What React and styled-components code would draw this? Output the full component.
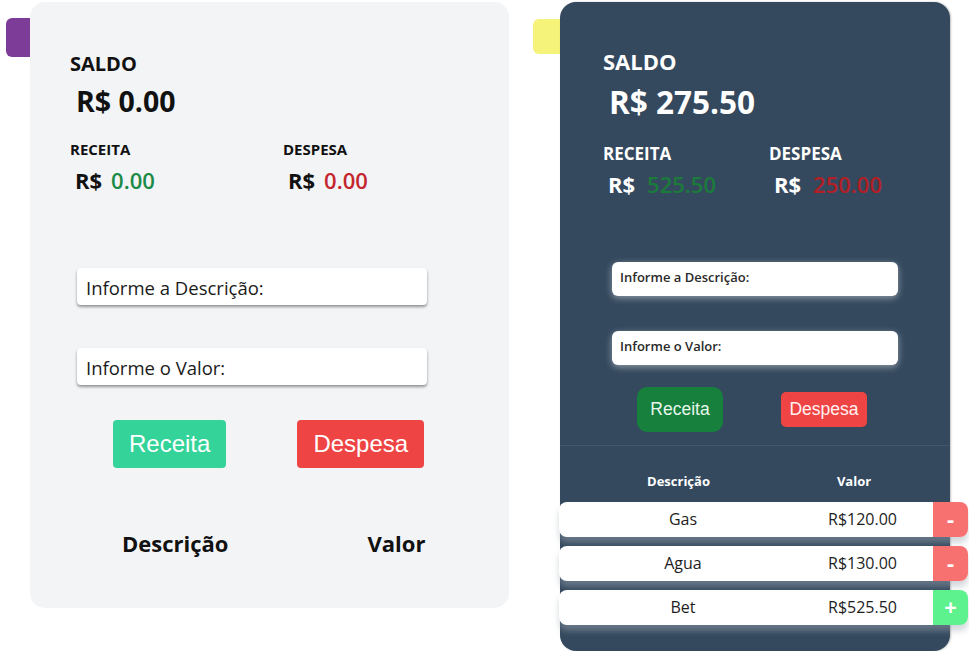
import React from 'react'
import styled, { createGlobalStyle } from 'styled-components'

const GlobalStyle = createGlobalStyle`
  body {
    margin: 0;
    background: #ffffff;
    font-family: 'Open Sans', 'Noto Sans', sans-serif;
  }
`

const lancamentos = [
  { descricao: 'Gas', valor: 'R$120.00', tipo: 'despesa' },
  { descricao: 'Agua', valor: 'R$130.00', tipo: 'despesa' },
  { descricao: 'Bet', valor: 'R$525.50', tipo: 'receita' },
]

function App() {
  return (
    <>
      <GlobalStyle />
      <Page>
        {/* ---- tema claro */}
        <Group>
          <Tab $color="#7d3c98" $w={24} $h={39} $top={16} />
          <LightPanel>
            <Label $size={20}>SALDO</Label>
            <Big $size={28.5} $mt={13}>R$ 0.00</Big>
            <Totals $col={213} $mt={26}>
              <div>
                <Label $size={15}>RECEITA</Label>
                <Amount $size={22} $mt={12} $gap={9}>
                  R$<Num $color="#1b8a47">0.00</Num>
                </Amount>
              </div>
              <div>
                <Label $size={15}>DESPESA</Label>
                <Amount $size={22} $mt={12} $gap={9}>
                  R$<Num $color="#c4262d">0.00</Num>
                </Amount>
              </div>
            </Totals>
            <LightInput placeholder="Informe a Descrição:" $mt={77} />
            <LightInput placeholder="Informe o Valor:" $mt={43} />
            <LightButtons>
              <LightButton $bg="#34d399">Receita</LightButton>
              <LightButton $bg="#ef4444">Despesa</LightButton>
            </LightButtons>
            <LightHead>
              <span>Descrição</span>
              <span>Valor</span>
            </LightHead>
          </LightPanel>
        </Group>

        {/* ---- tema escuro */}
        <Group $ml={24}>
          <Tab $color="#f5f379" $w={27} $h={35} $top={17} />
          <DarkPanel>
            <Summary>
              <Label $size={22} $light>SALDO</Label>
              <Big $size={31.5} $mt={14} $light>R$ 275.50</Big>
              <Totals $col={166} $mt={27}>
                <div>
                  <Label $size={17} $light>RECEITA</Label>
                  <Amount $size={22} $mt={11} $gap={12} $light>
                    R$<Num $color="#1b7b3a">525.50</Num>
                  </Amount>
                </div>
                <div>
                  <Label $size={17} $light>DESPESA</Label>
                  <Amount $size={22} $mt={11} $gap={12} $light>
                    R$<Num $color="#b21f26">250.00</Num>
                  </Amount>
                </div>
              </Totals>
            </Summary>
            <DarkInput placeholder="Informe a Descrição:" $mt={67} />
            <DarkInput placeholder="Informe o Valor:" $mt={35} />
            <DarkButtons>
              <DarkReceita>Receita</DarkReceita>
              <DarkDespesa>Despesa</DarkDespesa>
            </DarkButtons>
            <Divider />
            <TableHead>
              <span>Descrição</span>
              <span>Valor</span>
            </TableHead>
            <Rows>
              {lancamentos.map((item) => (
                <Row key={item.descricao}>
                  <Cell>{item.descricao}</Cell>
                  <Value>{item.valor}</Value>
                  <RowAction $tipo={item.tipo}>
                    {item.tipo === 'receita' ? '+' : '-'}
                  </RowAction>
                </Row>
              ))}
            </Rows>
          </DarkPanel>
        </Group>
      </Page>
    </>
  )
}

export default App

// ---- layout
const Page = styled.div`
  display: flex;
  align-items: flex-start;
  padding: 2px 0 0 6px;
`

const Group = styled.div`
  display: flex;
  align-items: flex-start;
  margin-left: ${(p) => p.$ml || 0}px;
`

const Tab = styled.div`
  width: ${(p) => p.$w}px;
  height: ${(p) => p.$h}px;
  margin-top: ${(p) => p.$top}px;
  background: ${(p) => p.$color};
  border-radius: 6px 0 0 6px;
`

// ---- paineis
const LightPanel = styled.section`
  width: 479px;
  box-sizing: border-box;
  padding: 52px 0 54px 40px;
  background: #f3f4f6;
  border-radius: 15px;
  display: flex;
  flex-direction: column;
`

const DarkPanel = styled.section`
  width: 390px;
  box-sizing: border-box;
  padding: 48px 0 26px 0;
  background: #34495e;
  border-radius: 16px;
  box-shadow: 1px 0 2px rgba(0, 0, 0, 0.25);
  display: flex;
  flex-direction: column;
`

const Summary = styled.div`
  padding-left: 43px;
`

// ---- textos do resumo
const Label = styled.div`
  font-size: ${(p) => p.$size}px;
  line-height: 1;
  font-weight: 700;
  color: ${(p) => (p.$light ? '#ffffff' : '#111111')};
`

const Big = styled.div`
  font-size: ${(p) => p.$size}px;
  line-height: 1;
  font-weight: 700;
  margin: ${(p) => p.$mt}px 0 0 6px;
  color: ${(p) => (p.$light ? '#ffffff' : '#111111')};
`

const Totals = styled.div`
  display: grid;
  grid-template-columns: ${(p) => p.$col}px 1fr;
  margin-top: ${(p) => p.$mt}px;
`

const Amount = styled.div`
  display: flex;
  font-size: ${(p) => p.$size}px;
  line-height: 1;
  font-weight: 700;
  margin: ${(p) => p.$mt}px 0 0 5px;
  color: ${(p) => (p.$light ? '#ffffff' : '#111111')};

  span {
    margin-left: ${(p) => p.$gap}px;
  }
`

const Num = styled.span`
  color: ${(p) => p.$color};
  font-weight: 600;
`

// ---- formulario claro
const LightInput = styled.input`
  width: 350px;
  height: 37px;
  box-sizing: border-box;
  margin: ${(p) => p.$mt}px 0 0 7px;
  padding: 2px 9px 0;
  border: none;
  border-radius: 4px;
  background: #ffffff;
  box-shadow: 0 2px 3px rgba(0, 0, 0, 0.4);
  font-family: 'Open Sans', sans-serif;
  font-size: 18.5px;
  outline: none;

  &::placeholder {
    color: #1a1a1a;
    opacity: 1;
  }
`

const LightButtons = styled.div`
  display: flex;
  gap: 71px;
  margin: 35px 0 0 43px;
`

const LightButton = styled.button`
  height: 48px;
  padding: 0 16px;
  border: none;
  border-radius: 4px;
  background: ${(p) => p.$bg};
  color: #ffffff;
  font-family: 'Liberation Sans', Arial, sans-serif;
  font-size: 24px;
`

const LightHead = styled.div`
  display: flex;
  margin: 64px 0 0 52px;
  font-size: 22px;
  line-height: 1;
  font-weight: 700;
  color: #111111;

  span + span {
    margin-left: 139px;
  }
`

// ---- formulario escuro
const DarkInput = styled.input`
  width: 286px;
  height: 34px;
  box-sizing: border-box;
  margin: ${(p) => p.$mt}px 0 0 52px;
  padding: 0 8px 3px;
  border: none;
  border-radius: 6px;
  background: #ffffff;
  box-shadow: 0 2px 7px rgba(255, 255, 255, 0.45);
  font-family: 'Open Sans', sans-serif;
  font-size: 13px;
  font-weight: 600;
  outline: none;

  &::placeholder {
    color: #2a2a2a;
    opacity: 1;
  }
`

const DarkButtons = styled.div`
  display: flex;
  align-items: center;
  gap: 58px;
  margin: 22px 0 0 77px;
`

const DarkReceita = styled.button`
  width: 86px;
  height: 45px;
  border: none;
  border-radius: 10px;
  background: #16803c;
  color: #e8f6ec;
  font-family: 'Liberation Sans', Arial, sans-serif;
  font-size: 17.5px;
`

const DarkDespesa = styled.button`
  width: 86px;
  height: 35px;
  padding: 0;
  border: none;
  border-radius: 5px;
  background: #ef4444;
  color: #fff1f1;
  font-family: 'Liberation Sans', Arial, sans-serif;
  font-size: 17.5px;
`

const Divider = styled.hr`
  margin: 13px 0 0;
  border: none;
  height: 1px;
  background: #42576c;
`

// ---- tabela
const TableHead = styled.div`
  display: grid;
  grid-template-columns: 239px 112px;
  margin: 29px 0 0 -1px;
  font-size: 13px;
  line-height: 1;
  font-weight: 700;
  color: #ffffff;
  text-align: center;
`

const Rows = styled.div`
  display: flex;
  flex-direction: column;
  gap: 9px;
  margin: 14px 0 0 -1px;
`

const Row = styled.div`
  display: grid;
  grid-template-columns: 248px 1fr 35px;
  align-items: center;
  width: 409px;
  height: 35px;
  border-radius: 8px;
  background: #ffffff;
  box-shadow: 0 6px 6px rgba(160, 170, 180, 0.45);
  font-size: 16px;
  color: #1e1e1e;
`

const Cell = styled.span`
  text-align: center;
`

const Value = styled.span`
  text-align: right;
  padding-right: 36px;
`

const RowAction = styled.button`
  height: 35px;
  padding: 0 0 2px;
  border: none;
  border-radius: 0 8px 8px 0;
  background: ${(p) => (p.$tipo === 'receita' ? '#5ef28f' : '#f87171')};
  color: #ffffff;
  font-family: 'Open Sans', sans-serif;
  font-size: 22px;
  font-weight: 700;
`
